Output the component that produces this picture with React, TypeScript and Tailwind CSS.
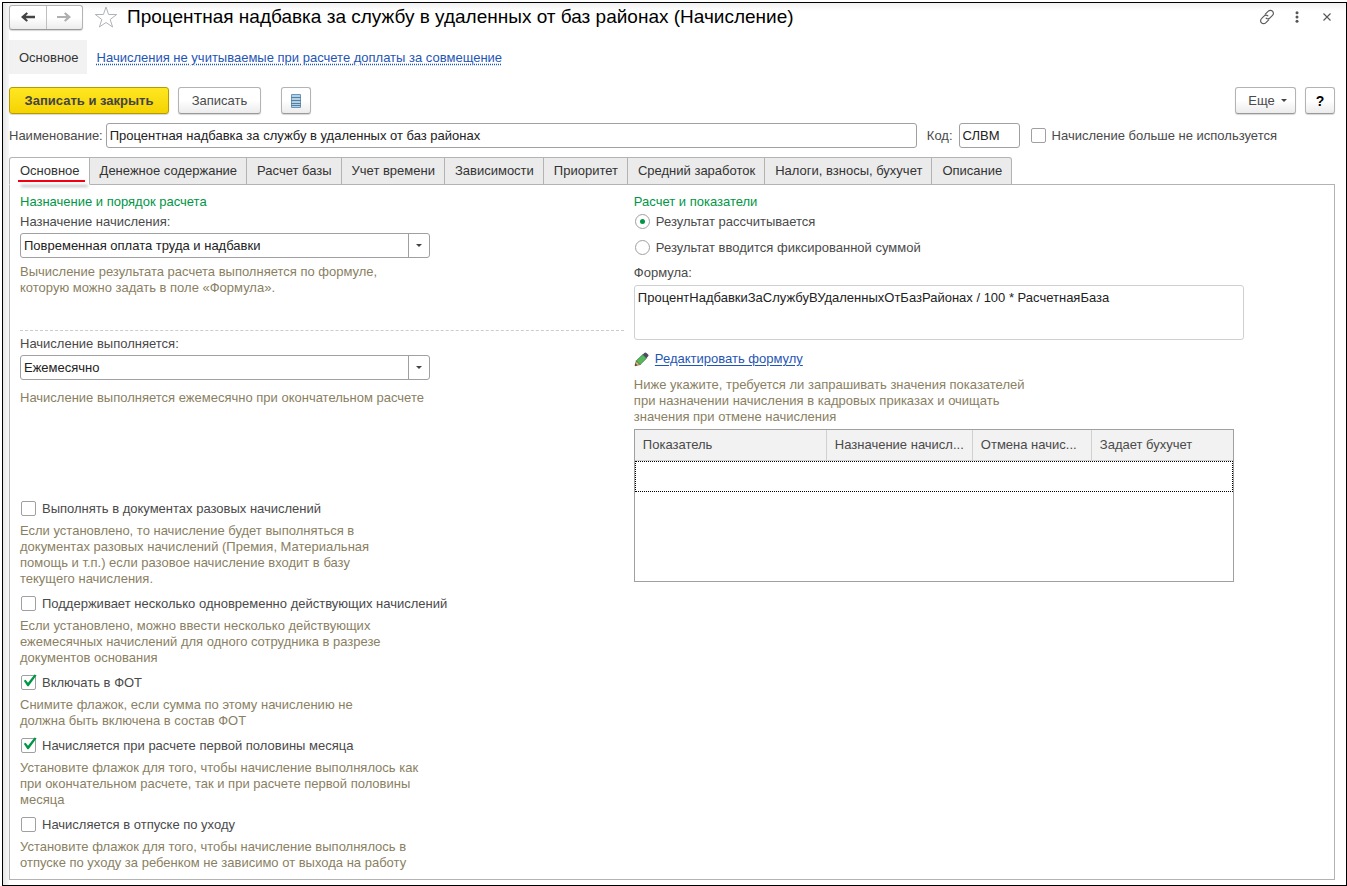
import { useState } from "react";
import clsx from "clsx";

const TABS = [
  "Основное",
  "Денежное содержание",
  "Расчет базы",
  "Учет времени",
  "Зависимости",
  "Приоритет",
  "Средний заработок",
  "Налоги, взносы, бухучет",
  "Описание",
];

const OPTIONS = [
  {
    id: "one-time",
    label: "Выполнять в документах разовых начислений",
    checked: false,
    hint: ["Если установлено, то начисление будет выполняться в", "документах разовых начислений (Премия, Материальная", "помощь и т.п.) если разовое начисление входит в базу", "текущего начисления."],
  },
  {
    id: "multiple",
    label: "Поддерживает несколько одновременно действующих начислений",
    checked: false,
    hint: ["Если установлено, можно ввести несколько действующих", "ежемесячных начислений для одного сотрудника в разрезе", "документов основания"],
  },
  {
    id: "fot",
    label: "Включать в ФОТ",
    checked: true,
    hint: ["Снимите флажок, если сумма по этому начислению не", "должна быть включена в состав ФОТ"],
  },
  {
    id: "first-half",
    label: "Начисляется при расчете первой половины месяца",
    checked: true,
    hint: ["Установите флажок для того, чтобы начисление выполнялось как", "при окончательном расчете, так и при расчете первой половины", "месяца"],
  },
  {
    id: "child-care",
    label: "Начисляется в отпуске по уходу",
    checked: false,
    hint: ["Установите флажок для того, чтобы начисление выполнялось в", "отпуске по уходу за ребенком не зависимо от выхода на работу"],
  },
];

const COLUMNS = [
  { title: "Показатель", width: "w-48" },
  { title: "Назначение начисл...", width: "w-[146px]" },
  { title: "Отмена начис...", width: "w-[119px]" },
  { title: "Задает бухучет", width: "w-auto" },
];

const BTN = "h-[27px] rounded-[3px] border border-[#b3b3b3] border-b-[#999] bg-linear-to-b from-white from-50% to-[#ececec] text-[#4a4a4a] shadow-[0_1px_1px_#d8d8d8]";
const FIELD = "h-[25px] rounded-[3px] border border-[#a0a0a0] bg-white px-[3px] text-[#222] outline-none";

function Hint({ lines }: { lines: string[] }) {
  return (
    <p className="text-[#8a7f63]">
      {lines.map((line) => (
        <span key={line} className="block whitespace-nowrap">{line}</span>
      ))}
    </p>
  );
}

function Checkbox({ id, label, defaultChecked = false }: { id: string; label: string; defaultChecked?: boolean }) {
  return (
    <div className="flex items-center gap-1.5 whitespace-nowrap">
      <span className="relative flex h-4 w-[15px] items-start">
        <input
          id={id}
          type="checkbox"
          defaultChecked={defaultChecked}
          className="peer size-[15px] appearance-none rounded-[2px] border border-[#a0a0a0] bg-white"
        />
        <svg viewBox="0 0 16 16" className="pointer-events-none absolute -top-px left-0 hidden size-4 peer-checked:block">
          <path d="M2.800 6.800 L4.600 5.800 L7 8.800 L13.500 .6 L15.600 1.200 L7.600 12.200 L6.400 12.200z" fill="#009646" />
        </svg>
      </span>
      <label htmlFor={id}>{label}</label>
    </div>
  );
}

function Radio({ id, label, defaultChecked = false }: { id: string; label: string; defaultChecked?: boolean }) {
  return (
    <div className="flex items-center gap-1.5 pl-px">
      <span className="relative flex h-4 w-[15px] items-start">
        <input
          id={id}
          type="radio"
          name="result"
          defaultChecked={defaultChecked}
          className="peer size-[15px] appearance-none rounded-full border border-[#a0a0a0] bg-white"
        />
        <span className="pointer-events-none absolute top-[5px] left-[5px] hidden size-[5px] rounded-full bg-[#009646] peer-checked:block" />
      </span>
      <label htmlFor={id}>{label}</label>
    </div>
  );
}

function Select({ id, label, value }: { id: string; label: string; value: string }) {
  return (
    <div>
      <label htmlFor={id} className="mb-[3px] block">{label}</label>
      <div className="relative max-w-[410px]">
        <select id={id} className={clsx(FIELD, "block w-full appearance-none")}>
          <option>{value}</option>
        </select>
        <span className="pointer-events-none absolute inset-y-0 right-0 flex w-[22px] items-center justify-center border-l border-[#a0a0a0] pr-0.5">
          <svg viewBox="0 0 6 3" className="h-[3px] w-1.5">
            <path d="M0 0h6L3 3z" fill="#444" />
          </svg>
        </span>
      </div>
    </div>
  );
}

function TitleBar() {
  return (
    <header className="flex h-[27px] items-center pt-px">
      <div className="flex h-[25px] w-[74px] rounded-[3px] border border-[#b3b3b3] border-b-[#999] bg-linear-to-b from-white from-50% to-[#ececec] shadow-[0_1px_1px_#d8d8d8]">
        <button aria-label="Назад" className="flex flex-1 items-center justify-center border-r border-[#c0c0c0]">
          <svg viewBox="0 0 14 10" className="h-2.5 w-3.5">
            <path d="M0 5L5.500 .3 7 1.600 4.800 3.800H14v2.400H4.800L7 8.400 5.500 9.700z" fill="#444" />
          </svg>
        </button>
        <button aria-label="Вперед" className="flex flex-1 items-center justify-center">
          <svg viewBox="0 0 14 10" className="h-2.5 w-3.5">
            <path d="M14 5L8.500 .3 7 1.600 9.200 4H0v2h9.200L7 8.400 8.500 9.700z" fill="#b0b0b0" />
          </svg>
        </button>
      </div>
      <button aria-label="Избранное" className="ml-[11px]">
        <svg viewBox="0 0 24 22" className="h-[22px] w-6">
          <path d="M12 1l2.600 7.500h8.100l-6.500 5 2.400 7.500-6.600-4.500L5.400 21l2.400-7.500-6.500-5h8.100z" fill="#fff" stroke="#b0b4b8" />
        </svg>
      </button>
      <h1 className="ml-[9px] flex-1 text-[19px] leading-6 whitespace-nowrap text-black">
        Процентная надбавка за службу в удаленных от баз районах (Начисление)
      </h1>
      <button aria-label="Получить ссылку">
        <svg viewBox="0 0 16 16" className="size-4" fill="none" stroke="#5c5c5c" strokeWidth="1.200" strokeLinecap="round">
          <path d="M6.300 5.200l3-3a2.900 2.900 0 0 1 4.200 0a2.900 2.900 0 0 1 0 4.200L11 8.900a2.900 2.900 0 0 1-3.800.3" />
          <path d="M9.700 10.800l-3 3a2.900 2.900 0 0 1-4.200 0a2.900 2.900 0 0 1 0-4.200L5 7.100a2.900 2.900 0 0 1 3.800-.3" />
        </svg>
      </button>
      <button aria-label="Меню" className="ml-5">
        <svg viewBox="0 0 4 12" className="h-3 w-1" fill="#555">
          <circle cx="2" cy="1.800" r="1.500" />
          <circle cx="2" cy="6" r="1.500" />
          <circle cx="2" cy="10.200" r="1.500" />
        </svg>
      </button>
      <button aria-label="Закрыть" className="mr-1 ml-6">
        <svg viewBox="0 0 8 8" className="size-2">
          <path d="M.5.5l7 7M7.500.5l-7 7" stroke="#555" strokeWidth="1.100" />
        </svg>
      </button>
    </header>
  );
}

function Toolbar() {
  return (
    <div className="mt-[13px] flex">
      <button className="h-[27px] w-40 rounded-[3px] border border-[#b59a00] bg-linear-to-b from-[#ffe71f] to-[#f5d300] font-bold text-[#444] shadow-[0_1px_1px_#d8d8d8]">
        Записать и закрыть
      </button>
      <button className={clsx(BTN, "ml-[9px] w-[83px]")}>Записать</button>
      <button aria-label="Список" className={clsx(BTN, "ml-5 flex w-[30px] items-center justify-center")}>
        <svg viewBox="0 0 10 14" className="h-3.5 w-2.5">
          <path d="M.5.500h9v13h-9z" fill="#b4d0e6" stroke="#6d97b5" />
          <path d="M0 3.500h10M0 6.500h10M0 9.500h10M0 11.500h10" stroke="#54819f" />
        </svg>
      </button>
      <button className={clsx(BTN, "ml-auto flex w-[61px] items-center justify-center gap-1.5 pl-1")}>
        Еще
        <svg viewBox="0 0 6 3" className="h-[3px] w-1.5">
          <path d="M0 0h6L3 3z" fill="#444" />
        </svg>
      </button>
      <button className={clsx(BTN, "ml-[9px] w-[30px] text-[14px] font-bold text-black")}>?</button>
    </div>
  );
}

function IndicatorTable() {
  return (
    <div className="mt-1 h-[153px] max-w-[600px] border border-[#a0a0a0]">
      <table className="w-full table-fixed border-separate border-spacing-0">
        <thead>
          <tr className="h-[31px] bg-[#f2f2f2]">
            {COLUMNS.map((col) => (
              <th
                key={col.title}
                className={clsx("border-r border-b border-[#d0d0d0] pr-1 pl-2 text-left font-normal whitespace-nowrap last:border-r-0", col.width)}
              >
                {col.title}
              </th>
            ))}
          </tr>
        </thead>
        <tbody>
          <tr className="h-[31px] outline-1 -outline-offset-1 outline-black outline-dotted">
            {COLUMNS.map((col) => <td key={col.title} />)}
          </tr>
        </tbody>
      </table>
    </div>
  );
}

function MainTab() {
  return (
    <div className="grid grid-cols-[7fr_8fr] gap-2.5 px-2.5 pt-[9px] pb-2">
      <section>
        <h2 className="mb-1 text-[#009646]">Назначение и порядок расчета</h2>
        <Select id="purpose" label="Назначение начисления:" value="Повременная оплата труда и надбавки" />
        <div className="mt-1.5 h-[66px]">
          <Hint lines={["Вычисление результата расчета выполняется по формуле,", "которую можно задать в поле «Формула»."]} />
        </div>
        <div className="mb-[5px] border-t border-dashed border-[#ccc]" />
        <Select id="period" label="Начисление выполняется:" value="Ежемесячно" />
        <div className="mt-2.5 h-[111px]">
          <Hint lines={["Начисление выполняется ежемесячно при окончательном расчете"]} />
        </div>
        <div className="flex flex-col gap-[9px]">
          {OPTIONS.map((opt) => (
            <div key={opt.id} className="flex flex-col gap-1.5">
              <div className="pl-px">
                <Checkbox id={opt.id} label={opt.label} defaultChecked={opt.checked} />
              </div>
              <Hint lines={opt.hint} />
            </div>
          ))}
        </div>
      </section>

      <section>
        <h2 className="mb-1 text-[#009646]">Расчет и показатели</h2>
        <div className="mb-[9px] flex flex-col gap-2.5">
          <Radio id="calculated" label="Результат рассчитывается" defaultChecked />
          <Radio id="fixed" label="Результат вводится фиксированной суммой" />
        </div>
        <label htmlFor="formula" className="mb-1 block">Формула:</label>
        <textarea
          id="formula"
          readOnly
          className="block h-[55px] w-full max-w-[610px] resize-none rounded-[3px] border border-[#d0d0d0] px-[3px] py-1 text-[#222] outline-none"
          defaultValue="ПроцентНадбавкиЗаСлужбуВУдаленныхОтБазРайонах / 100 * РасчетнаяБаза"
        />
        <div className="mt-[11px] mb-2.5 flex items-center gap-1.5">
          <svg viewBox="0 0 15 15" className="size-[15px]">
            <path d="M1 13.800L2.300 8.800l3.800 3.800z" fill="#e9b565" stroke="#6b5431" strokeWidth=".7" />
            <path d="M1 13.800l.6-2.200 1.600 1.600z" fill="#333" />
            <path d="M2.300 8.800L8.800 2.600l3.700 3.700L6.100 12.600z" fill="#56b85c" stroke="#2e6e37" strokeWidth=".7" />
            <path d="M8.800 2.600l1.900-1.800a1.200 1.200 0 0 1 1.700.1l1.700 1.700a1.200 1.200 0 0 1 0 1.700L12.500 6.300z" fill="#4c4a5c" />
          </svg>
          <a href="#formula" className="text-[#1f55b5] underline underline-offset-2">Редактировать формулу</a>
        </div>
        <Hint lines={["Ниже укажите, требуется ли запрашивать значения показателей", "при назначении начисления в кадровых приказах и очищать", "значения при отмене начисления"]} />
        <IndicatorTable />
      </section>
    </div>
  );
}

export default function App() {
  const [active, setActive] = useState(TABS[0]);

  return (
    <div className="flex min-h-screen flex-col bg-white pt-0.5 pl-0.5 font-['Liberation_Sans',Arial,sans-serif] text-[13px] leading-4 text-[#4a4a4a]">
      <div className="flex flex-1 border border-black">
        <div className="w-1.5 bg-linear-to-r from-[#e6e6e6] to-[#f8f8f8]" />
        <main className="flex min-w-0 flex-1 flex-col bg-linear-to-b from-[#f0f0f0] to-white to-[8px] pr-[11px] pb-[5px]">
          <TitleBar />

          <nav className="mt-2.5 flex h-[34px]">
            <a href="#main" className="flex items-center bg-[#f2f2f2] pt-0.5 pr-2 pl-2.5 text-[#333]">Основное</a>
            <a href="#excluded" className="ml-2.5 flex items-center pt-0.5 text-[#1f55b5]">
              <span className="underline decoration-dotted underline-offset-2">
                Начисления не учитываемые при расчете доплаты за совмещение
              </span>
            </a>
          </nav>

          <Toolbar />

          <div className="mt-[9px] flex items-center">
            <label htmlFor="name" className="mr-[3px]">Наименование:</label>
            <input
              id="name"
              className={clsx(FIELD, "min-w-0 flex-1")}
              defaultValue="Процентная надбавка за службу в удаленных от баз районах"
            />
            <label htmlFor="code" className="mr-1.5 ml-2.5">Код:</label>
            <input id="code" className={clsx(FIELD, "w-[61px]")} defaultValue="СЛВМ" />
            <div className="mr-[58px] ml-[11px]">
              <Checkbox id="unused" label="Начисление больше не используется" />
            </div>
          </div>

          <div role="tablist" className="relative mt-[9px] flex">
            {TABS.map((tab) => (
              <button
                key={tab}
                role="tab"
                aria-selected={active === tab}
                onClick={() => setActive(tab)}
                className={clsx(
                  "relative -mb-px h-7 border border-l-0 border-[#b3b3b3] pr-[9px] pl-2.5 whitespace-nowrap text-[#333] first:rounded-tl-[3px] first:border-l last:rounded-tr-[3px]",
                  active === tab ? "border-b-white bg-white" : "bg-[#ebebeb]"
                )}
              >
                {tab}
                {active === tab && (
                  <span className="absolute right-1 bottom-0.5 left-2 h-0.5 bg-[#f00010] shadow-[3px_5px_3px_#bbb]" />
                )}
              </button>
            ))}
          </div>
          <div className="flex-1 border border-[#b3b3b3]">
            <MainTab />
          </div>
        </main>
      </div>
    </div>
  );
}
